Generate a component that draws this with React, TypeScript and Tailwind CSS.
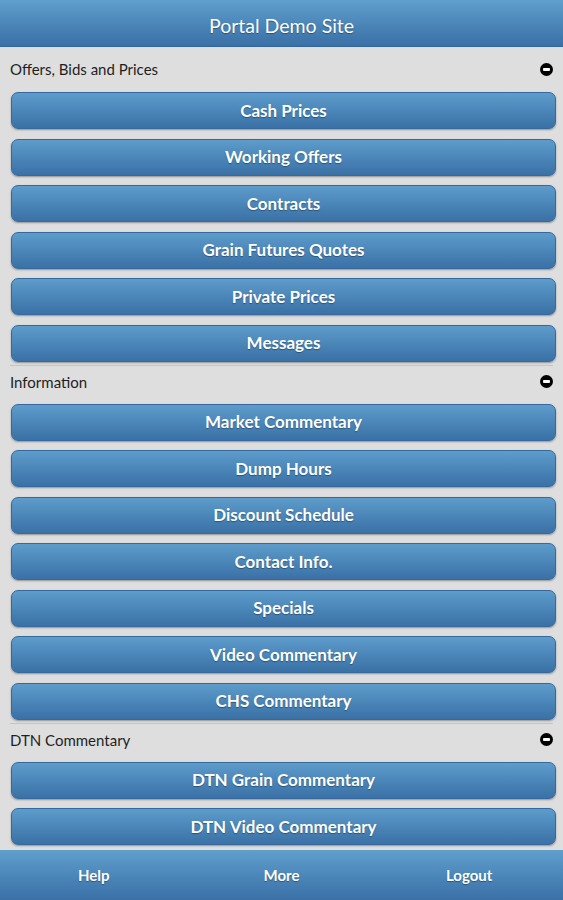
const sections = [
  {
    title: "Offers, Bids and Prices",
    items: ["Cash Prices", "Working Offers", "Contracts", "Grain Futures Quotes", "Private Prices", "Messages"],
  },
  {
    title: "Information",
    items: [
      "Market Commentary",
      "Dump Hours",
      "Discount Schedule",
      "Contact Info.",
      "Specials",
      "Video Commentary",
      "CHS Commentary",
    ],
  },
  {
    title: "DTN Commentary",
    items: ["DTN Grain Commentary", "DTN Video Commentary"],
  },
];

function MinusIcon() {
  return (
    <span className="flex h-[13px] w-[13px] items-center justify-center rounded-full bg-black">
      <span className="h-[3px] w-[7px] rounded-[1px] bg-white" />
    </span>
  );
}

export default function App() {
  return (
    <div className="flex h-[900px] w-[563px] flex-col overflow-hidden bg-[#dedede] font-['Lato','Liberation_Sans',sans-serif]">
      {/* header */}
      <div className="flex h-[47px] shrink-0 items-center justify-center border-b border-[#33679b] bg-gradient-to-b from-[#5f9fcd] to-[#3a70a6] pt-[6px] text-[19.5px] text-white [text-shadow:0_1px_1px_rgba(0,0,0,0.35)]">
        Portal Demo Site
      </div>

      <div className="flex-1 pt-[7px]">
        {sections.map((s, i) => (
          <div key={s.title}>
            {i > 0 && <div className="mx-[10px] h-px bg-[#c4c4c4]" />}
            <div
              className={
                "flex h-[38px] items-start justify-between pl-[10px] pr-[10px] " +
                (i > 0 ? "pt-[5px]" : "pt-[4px]")
              }
            >
              <span className="text-[15px] leading-[22px] text-[#1e1e1e]">{s.title}</span>
              <span className="flex h-[22px] items-center">
                <MinusIcon />
              </span>
            </div>
            <div className="flex flex-col gap-[9.5px] pb-[3px] pl-[11px] pr-[7px]">
              {s.items.map((item) => (
                <button
                  key={item}
                  className="flex h-[37px] items-center justify-center rounded-[7px] border border-[#3569a0] bg-gradient-to-b from-[#5d9ccb] to-[#3a71a6] text-[17px] font-bold text-white shadow-[0_1px_2px_rgba(0,0,0,0.35)] [text-shadow:0_1px_1px_rgba(0,0,0,0.35)]"
                >
                  {item}
                </button>
              ))}
            </div>
          </div>
        ))}
      </div>

      {/* footer */}
      <div className="grid h-[50px] shrink-0 grid-cols-3 items-center bg-gradient-to-b from-[#5f9fcd] to-[#3a70a6] text-[15px] font-bold text-white [text-shadow:0_1px_1px_rgba(0,0,0,0.35)]">
        <span className="text-center">Help</span>
        <span className="text-center">More</span>
        <span className="text-center">Logout</span>
      </div>
    </div>
  );
}
